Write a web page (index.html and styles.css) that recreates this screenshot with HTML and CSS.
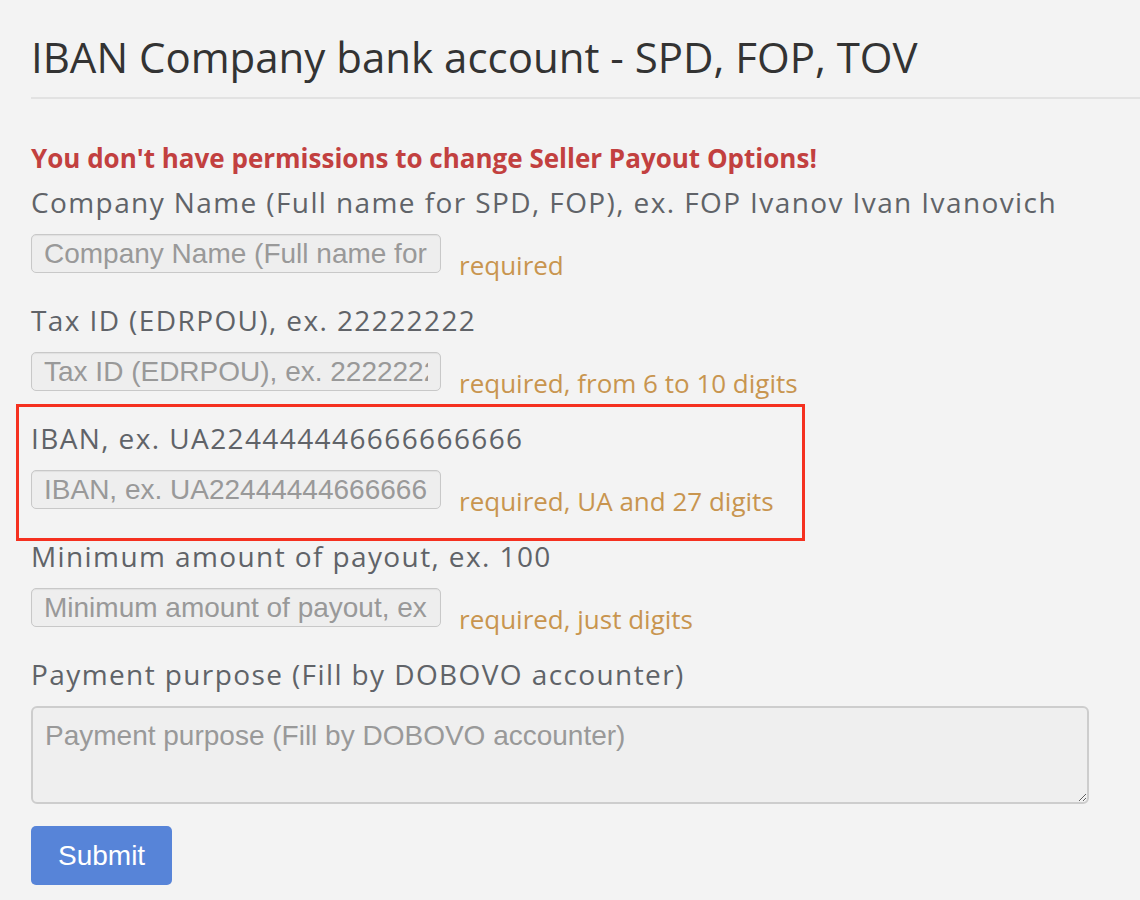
FILE: index.html
```html
<!DOCTYPE html>
<html lang="en">
<head>
<meta charset="utf-8">
<title>IBAN Company bank account</title>
<link rel="stylesheet" href="styles.css">
</head>
<body>
<div class="page">
  <h1 class="title">IBAN Company bank account - SPD, FOP, TOV</h1>
  <form class="payout-form">
    <p class="error">You don't have permissions to change Seller Payout Options!</p>

    <div class="field">
      <label class="field-label">Company Name (Full name for SPD, FOP), ex. FOP Ivanov Ivan Ivanovich</label>
      <div class="field-row">
        <input class="field-input" type="text" disabled placeholder="Company Name (Full name for SPD, FOP), ex. FOP Ivanov Ivan Ivanovich">
        <span class="hint">required</span>
      </div>
    </div>

    <div class="field">
      <label class="field-label">Tax ID (EDRPOU), ex. 22222222</label>
      <div class="field-row">
        <input class="field-input" type="text" disabled placeholder="Tax ID (EDRPOU), ex. 22222222">
        <span class="hint">required, from 6 to 10 digits</span>
      </div>
    </div>

    <div class="field field-highlight">
      <label class="field-label">IBAN, ex. UA224444446666666666</label>
      <div class="field-row">
        <input class="field-input" type="text" disabled placeholder="IBAN, ex. UA224444446666666666">
        <span class="hint">required, UA and 27 digits</span>
      </div>
    </div>

    <div class="field">
      <label class="field-label">Minimum amount of payout, ex. 100</label>
      <div class="field-row">
        <input class="field-input" type="text" disabled placeholder="Minimum amount of payout, ex. 100">
        <span class="hint">required, just digits</span>
      </div>
    </div>

    <div class="field field-last">
      <label class="field-label">Payment purpose (Fill by DOBOVO accounter)</label>
      <textarea class="field-textarea" disabled placeholder="Payment purpose (Fill by DOBOVO accounter)"></textarea>
    </div>

    <button class="submit" type="button">Submit</button>
  </form>
</div>
</body>
</html>
```

FILE: styles.css
```css
html, body {
  margin: 0;
  padding: 0;
  background: #f3f3f3;
}

.page {
  padding: 34px 0 0 31px;
  font-family: "Open Sans", "Liberation Sans", sans-serif;
}

.title {
  margin: 0;
  padding-bottom: 17px;
  border-bottom: 2px solid #e2e2e2;
  font-size: 42px;
  line-height: 46px;
  font-weight: 400;
  color: #333333;
}

.payout-form {
  padding-top: 42px;
}

.error {
  margin: 0 0 7px 0;
  font-size: 26px;
  line-height: 34px;
  font-weight: 700;
  color: #c2403f;
}

.field {
  margin-bottom: 27px;
}

.field-last {
  margin-bottom: 0;
}

.field-label {
  display: block;
  margin-bottom: 12px;
  font-size: 28px;
  line-height: 40px;
  letter-spacing: 1.4px;
  color: #606368;
}

.field-row {
  display: flex;
  align-items: flex-end;
  gap: 18px;
}

.field-input {
  box-sizing: border-box;
  width: 410px;
  height: 39px;
  margin: 0;
  padding: 2px 12px;
  border: 1px solid #c8c8c8;
  border-radius: 5px;
  background: #eeeeee;
  box-shadow: inset 0 1px 1px rgba(0, 0, 0, 0.06);
  font-family: "Liberation Sans", Arial, sans-serif;
  font-size: 28px;
  color: #555555;
}

.field-input::placeholder,
.field-textarea::placeholder {
  color: #999999;
  opacity: 1;
}

.hint {
  font-size: 26px;
  line-height: 34px;
  margin-bottom: -9px;
  color: #c8954f;
}

.field-highlight {
  position: relative;
}

.field-highlight::before {
  content: "";
  position: absolute;
  top: -14px;
  left: -15px;
  width: 789px;
  height: 137px;
  box-sizing: border-box;
  border: 3px solid #f5301f;
  pointer-events: none;
}

.field-textarea {
  display: block;
  box-sizing: border-box;
  width: 1058px;
  height: 98px;
  margin: 0;
  padding: 12px 12px;
  border: 2px solid #cdcdcd;
  border-radius: 6px;
  background: #efefef;
  font-family: "Liberation Sans", Arial, sans-serif;
  font-size: 28px;
  line-height: 32px;
  resize: vertical;
}

.submit {
  display: block;
  box-sizing: border-box;
  height: 59px;
  margin-top: 22px;
  padding: 0 27px;
  border: none;
  border-radius: 5px;
  background: #5784d8;
  color: #ffffff;
  font-family: "Liberation Sans", Arial, sans-serif;
  font-size: 28px;
  line-height: 59px;
  cursor: pointer;
}
```
